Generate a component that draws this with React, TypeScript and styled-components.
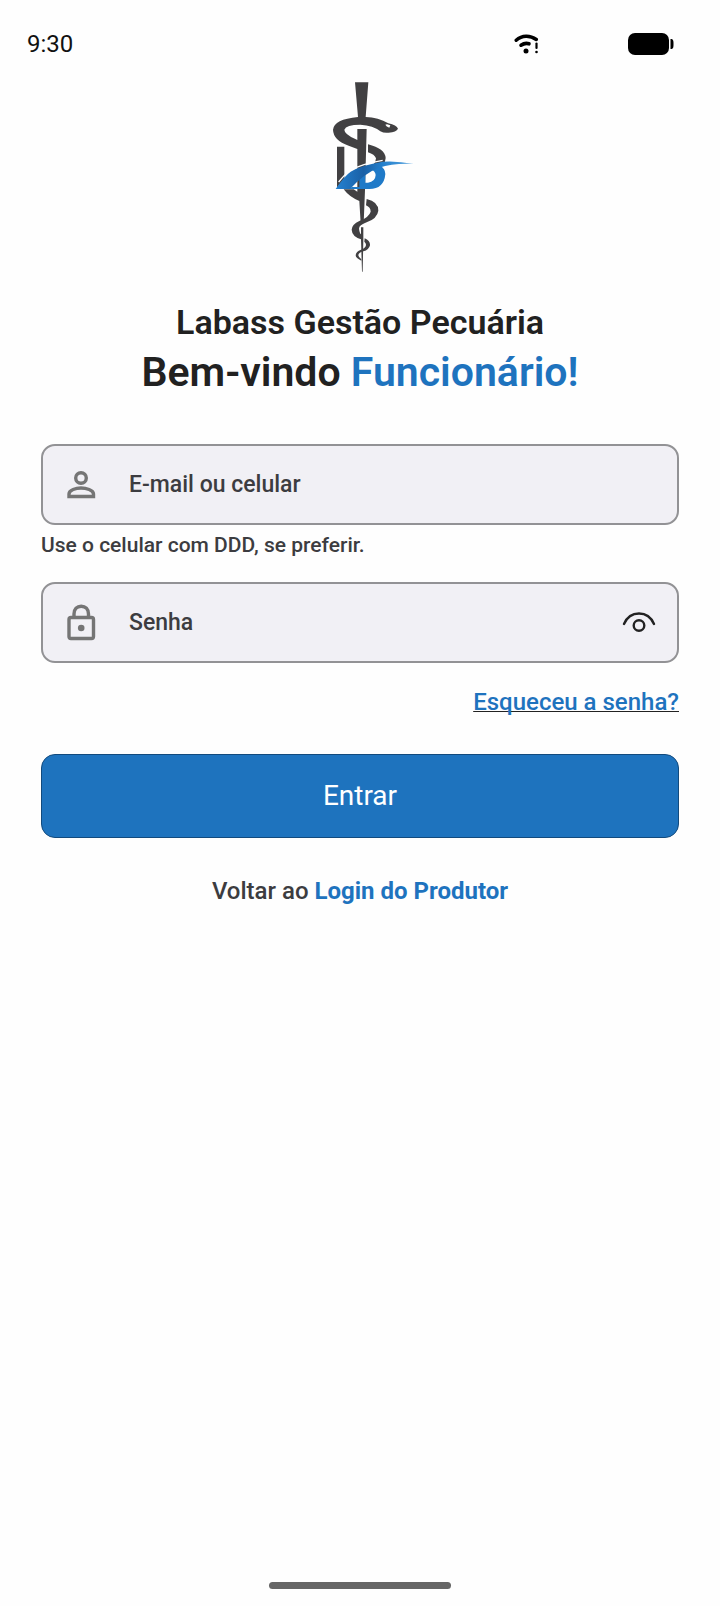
import { useState } from 'react';
import styled, { createGlobalStyle } from 'styled-components';

const colors = {
  primary: '#1e73be',
  primaryDark: '#124a7d',
  title: '#212121',
  text: '#3c3c40',
  icon: '#757575',
  border: '#929295',
  field: '#f1f0f5',
};

const GlobalStyle = createGlobalStyle`
  *, *::before, *::after {
    box-sizing: border-box;
  }

  body {
    margin: 0;
    background: #fefefe;
    color: ${colors.text};
    font-family: Roboto, 'Liberation Sans', sans-serif;
  }
`;

const Screen = styled.div`
  min-height: 100vh;
  display: flex;
  flex-direction: column;
`;

const StatusBar = styled.header`
  display: flex;
  align-items: center;
  justify-content: space-between;
  height: 75px;
  padding: 12px 46px 0 27px;
`;

const Clock = styled.time`
  color: #111;
  font-size: 24px;
  line-height: 28px;
`;

const StatusIcons = styled.div`
  display: flex;
  align-items: center;
  gap: 88px;
`;

const Content = styled.main`
  flex: 1;
  display: flex;
  flex-direction: column;
  padding: 0 41px;
`;

const LogoBox = styled.div`
  display: flex;
  justify-content: center;
  height: 223px;
`;

const Heading = styled.h1`
  display: flex;
  flex-direction: column;
  align-items: center;
  margin: 0 0 46px;
  color: ${colors.title};
  font-weight: 600;
  text-align: center;
`;

const AppName = styled.span`
  font-size: 34px;
  line-height: 48px;
`;

const Welcome = styled.span`
  font-size: 41px;
  line-height: 52px;
`;

const Highlight = styled.span`
  color: ${colors.primary};
`;

const Form = styled.form`
  display: flex;
  flex-direction: column;
`;

const Field = styled.label`
  display: flex;
  align-items: center;
  height: 81px;
  padding: 0 21px 0 20px;
  border: 2px solid ${colors.border};
  border-radius: 14px;
  background: ${colors.field};

  &:focus-within {
    border-color: ${colors.primary};
  }
`;

const Input = styled.input`
  flex: 1;
  min-width: 0;
  margin-left: 28px;
  padding: 0;
  border: 0;
  outline: 0;
  background: transparent;
  color: ${colors.title};
  font-family: inherit;
  font-size: 23px;
  font-weight: 500;
  line-height: 32px;

  &::placeholder {
    color: ${colors.text};
    opacity: 1;
  }
`;

const IconButton = styled.button`
  display: flex;
  padding: 0;
  border: 0;
  background: transparent;
  cursor: pointer;
`;

const Helper = styled.p`
  margin: 4px 0 21px;
  font-size: 21px;
  font-weight: 500;
  line-height: 32px;
`;

const ForgotLink = styled.a`
  align-self: flex-end;
  margin: 23px 0 36px;
  color: ${colors.primary};
  font-size: 24px;
  font-weight: 500;
  line-height: 32px;
  text-decoration: underline;
  text-decoration-color: #222;
  text-decoration-thickness: 1px;
  text-decoration-skip-ink: none;
`;

const SubmitButton = styled.button`
  height: 84px;
  border: 1px solid ${colors.primaryDark};
  border-radius: 14px;
  background: ${colors.primary};
  color: #fff;
  font-family: inherit;
  font-size: 28px;
  line-height: 32px;
  cursor: pointer;
`;

const BackText = styled.p`
  margin: 37px 0 0;
  font-size: 24px;
  font-weight: 500;
  line-height: 32px;
  text-align: center;
`;

const BackLink = styled.a`
  color: ${colors.primary};
  font-weight: 700;
  text-decoration: none;
`;

const HomeBar = styled.footer`
  display: flex;
  justify-content: center;
  padding-bottom: 17px;

  &::after {
    content: '';
    width: 182px;
    height: 7px;
    border-radius: 4px;
    background: #666;
  }
`;

function Logo() {
  return (
    <svg width="120" height="200" viewBox="-30 0 360 600" role="img" aria-label="Labass">
      <defs>
        <linearGradient id="swoosh" x1="80" y1="0" x2="310" y2="0" gradientUnits="userSpaceOnUse">
          <stop offset="0" stopColor="#2480cf" />
          <stop offset="0.35" stopColor="#1a60a6" />
          <stop offset="0.6" stopColor="#2380cd" />
          <stop offset="1" stopColor="#5aa5df" />
        </linearGradient>
      </defs>
      {/* staff and snake */}
      <g fill="#414042">
        <path d="M135 22H175L167 126Q205 127 235 145Q260 151 264 161Q259 171 236 173Q222 175 211 169Q190 151 151 149Q108 149 103 164Q103 177 136 192L142 195V162H170L165 345L161 445H152L148 378Q118 366 101 343H131L142 350V222L116 212Q70 196 69 164Q72 133 144 126Z" />
        <path d="M81 215H103V312L81 338Z" />
        <path d="M174 208Q225 221 227 249Q226 262 219 272H188Q198 262 198 250Q194 238 174 232Z" />
        <path d="M170 372Q205 380 205 407Q202 430 170 442Q147 450 147 461Q149 475 153 478V457H160V495L158 590H156L153 493Q126 484 125 464Q126 448 148 438Q177 427 182 410Q182 397 168 391Z" />
        <path d="M164 490Q181 497 180 511Q177 525 160 529Q145 533 145 541Q146 548 154 553V557Q137 550 137 541Q138 529 153 524Q168 518 168 509Q168 504 163 500Z" />
      </g>
      <path d="M231 148L241 151L238 158Q229 155 226 149Z" fill="#fff" />
      {/* lower half of the letters */}
      <path d="M114 342L126 336H148V306L166 292V323H174Q196 320 197 300Q196 288 184 284L210 272Q226 280 226 297Q222 342 178 342Z" fill="#1f7ac8" />
      <path d="M77 342Q103 303 122 290Q155 270 218 260Q262 257 311 267Q250 264 207 278Q165 293 120 342Z" fill="url(#swoosh)" />
      <path d="M86 321Q104 298 119 287Q155 266 218 256" fill="none" stroke="#fefefe" strokeWidth="4" />
    </svg>
  );
}

function WifiAlertIcon() {
  return (
    <svg width="26" height="20" viewBox="0 0 26 20" aria-hidden="true">
      <path d="M2.200 6.300C8 1 16 1 22.300 5.500" fill="none" stroke="#000" strokeWidth="3.400" strokeLinecap="round" />
      <path d="M7 11.200Q11 8.500 15 9.800" fill="none" stroke="#000" strokeWidth="3.600" strokeLinecap="round" />
      <circle cx="12" cy="17" r="2.500" />
      <path d="M22.500 9.500V14" stroke="#000" strokeWidth="2.200" strokeLinecap="round" />
      <circle cx="22.500" cy="18" r="1.300" />
    </svg>
  );
}

function BatteryIcon() {
  return (
    <svg width="46" height="22" viewBox="0 0 46 22" aria-hidden="true">
      <rect width="41" height="22" rx="7" />
      <path d="M42.500 6C45.500 6 45.500 8 45.500 11S45.500 16 42.500 16Z" />
    </svg>
  );
}

function PersonIcon() {
  return (
    <svg width="38" height="40" viewBox="0 0 38 40" fill="none" stroke={colors.icon} strokeWidth="3.400" aria-hidden="true">
      <circle cx="18" cy="13" r="5.300" />
      <path d="M6 31.500V29C6 25 13 23 18 23S30.500 25 30.500 29V31.500Z" />
    </svg>
  );
}

function LockIcon() {
  return (
    <svg width="38" height="40" viewBox="0 0 38 40" fill="none" stroke={colors.icon} strokeWidth="3.400" aria-hidden="true">
      <rect x="6" y="14.500" width="24.500" height="21" rx="2" />
      <path d="M11 14.500V11C11 6 14 3.200 18.200 3.200S25.500 6 25.500 11V14.500" />
      <circle cx="18.200" cy="25" r="3.300" fill={colors.icon} stroke="none" />
    </svg>
  );
}

function EyeIcon() {
  return (
    <svg width="34" height="24" viewBox="0 0 34 24" fill="none" stroke="#222" strokeWidth="2.400" strokeLinecap="round" aria-hidden="true">
      <path d="M2 13C8 -1 26 -1 32 13" />
      <circle cx="17" cy="14.500" r="5.300" />
    </svg>
  );
}

export default function App() {
  const [login, setLogin] = useState('');
  const [password, setPassword] = useState('');
  const [showPassword, setShowPassword] = useState(false);

  return (
    <Screen>
      <GlobalStyle />
      <StatusBar>
        <Clock>9:30</Clock>
        <StatusIcons>
          <WifiAlertIcon />
          <BatteryIcon />
        </StatusIcons>
      </StatusBar>

      <Content>
        <LogoBox>
          <Logo />
        </LogoBox>
        <Heading>
          <AppName>Labass Gestão Pecuária</AppName>
          <Welcome>
            Bem-vindo <Highlight>Funcionário!</Highlight>
          </Welcome>
        </Heading>

        <Form onSubmit={(e) => e.preventDefault()}>
          <Field htmlFor="login">
            <PersonIcon />
            <Input
              id="login"
              type="text"
              aria-label="E-mail ou celular"
              aria-describedby="login-helper"
              placeholder="E-mail ou celular"
              value={login}
              onChange={(e) => setLogin(e.target.value)}
            />
          </Field>
          <Helper id="login-helper">Use o celular com DDD, se preferir.</Helper>

          <Field htmlFor="password">
            <LockIcon />
            <Input
              id="password"
              type={showPassword ? 'text' : 'password'}
              aria-label="Senha"
              placeholder="Senha"
              value={password}
              onChange={(e) => setPassword(e.target.value)}
            />
            <IconButton
              type="button"
              aria-label={showPassword ? 'Ocultar senha' : 'Mostrar senha'}
              onClick={() => setShowPassword(!showPassword)}
            >
              <EyeIcon />
            </IconButton>
          </Field>

          <ForgotLink href="#recuperar">Esqueceu a senha?</ForgotLink>
          <SubmitButton type="submit">Entrar</SubmitButton>
        </Form>

        <BackText>
          Voltar ao <BackLink href="#produtor">Login do Produtor</BackLink>
        </BackText>
      </Content>

      <HomeBar />
    </Screen>
  );
}
